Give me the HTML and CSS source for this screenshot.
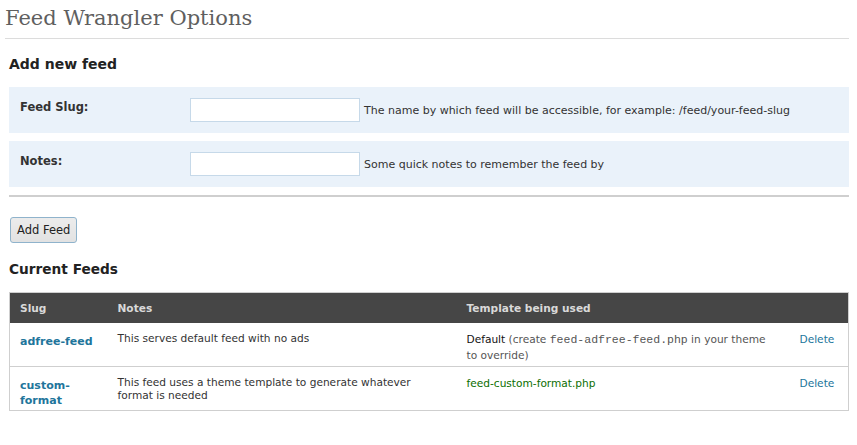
FILE: index.html
```html
<!DOCTYPE html>
<html>
<head>
<meta charset="utf-8">
<title>Feed Wrangler Options</title>
<link rel="stylesheet" href="styles.css">
</head>
<body>
<div class="wrap">
  <h2 class="page-title">Feed Wrangler Options</h2>
  <h3 class="section-title first">Add new feed</h3>
  <div class="form-row">
    <label class="form-label" for="slug">Feed Slug:</label>
    <input class="form-input" id="slug" type="text">
    <span class="form-help">The name by which feed will be accessible, for example: /feed/your-feed-slug</span>
  </div>
  <div class="form-row">
    <label class="form-label" for="notes">Notes:</label>
    <input class="form-input" id="notes" type="text">
    <span class="form-help">Some quick notes to remember the feed by</span>
  </div>
  <div class="divider"></div>
  <button class="button" type="button">Add Feed</button>
  <h3 class="section-title">Current Feeds</h3>
  <table class="feeds">
    <thead>
      <tr>
        <th class="col-slug">Slug</th>
        <th class="col-notes">Notes</th>
        <th class="col-template">Template being used</th>
        <th class="col-action"></th>
      </tr>
    </thead>
    <tbody>
      <tr>
        <td class="col-slug"><a class="slug" href="#">adfree-feed</a></td>
        <td class="col-notes">This serves default feed with no ads</td>
        <td class="col-template">Default <span class="tpl-hint">(create <code>feed-adfree-feed.php</code> in your theme to override)</span></td>
        <td class="col-action"><a class="delete" href="#">Delete</a></td>
      </tr>
      <tr>
        <td class="col-slug"><a class="slug" href="#">custom-format</a></td>
        <td class="col-notes">This feed uses a theme template to generate whatever format is needed</td>
        <td class="col-template"><span class="tpl-custom">feed-custom-format.php</span></td>
        <td class="col-action"><a class="delete" href="#">Delete</a></td>
      </tr>
    </tbody>
  </table>
</div>
</body>
</html>
```

FILE: styles.css
```css
html, body {
  margin: 0;
  padding: 0;
  background: #fff;
}
body {
  font-family: "DejaVu Sans", "Lucida Grande", Verdana, sans-serif;
  font-size: 10.6px;
  color: #333;
}
.wrap {
  padding: 0 8px 0 9px;
}
.page-title {
  font-family: "DejaVu Serif", Georgia, serif;
  font-weight: normal;
  font-size: 21px;
  color: #5f5f5f;
  margin: 0 0 0 -4px;
  line-height: 36px;
  border-bottom: 1px solid #dcdcdc;
  box-sizing: border-box;
  height: 39px;
}
.section-title {
  font-size: 14px;
  font-weight: bold;
  color: #222;
  margin: 0;
  height: 28px;
  line-height: 28px;
}
.section-title.first {
  margin-top: 11px;
  margin-bottom: 9px;
}
.form-row {
  display: flex;
  align-items: flex-start;
  background: #eaf2fa;
  height: 46px;
  box-sizing: border-box;
  padding: 11px 11px;
  margin-bottom: 8px;
}
.form-label {
  width: 170px;
  flex: none;
  font-size: 11.5px;
  font-weight: bold;
  color: #333;
  line-height: 14px;
  padding-top: 2px;
}
.form-input {
  width: 170px;
  height: 24px;
  box-sizing: border-box;
  border: 1px solid #c6d9e9;
  background: #fff;
  margin: 0;
  padding: 2px 4px;
  flex: none;
}
.form-help {
  margin-left: 4px;
  font-size: 11px;
  line-height: 14px;
  padding-top: 6px;
  color: #333;
}
.divider {
  height: 0;
  border-top: 2px solid #cfcfcf;
  margin-top: 2px;
}
.button {
  display: block;
  margin: 20px 0 0 1px;
  height: 26px;
  padding: 0 6px;
  font-family: "DejaVu Sans", "Lucida Grande", sans-serif;
  font-size: 11.5px;
  color: #222;
  background: linear-gradient(#ececec, #e2e2e2);
  border: 1px solid #8fb3cc;
  border-radius: 3px;
}
.button + .section-title {
  margin-top: 12px;
  margin-bottom: 9px;
  font-size: 13.7px;
}
.feeds {
  width: 100%;
  border-collapse: collapse;
  border: 1px solid #cfcfcf;
  table-layout: fixed;
}
.feeds th {
  background: #464646;
  color: #d9d9d9;
  font-weight: bold;
  font-size: 10.6px;
  text-align: left;
  height: 30px;
  padding: 0 10px;
  box-sizing: border-box;
}
.feeds td {
  vertical-align: top;
  height: 44px;
  padding: 9px 10px 0;
  box-sizing: border-box;
  border-bottom: 1px solid #cfcfcf;
  line-height: 13px;
}
.col-slug { width: 98px; }
.col-notes { width: 349px; }
.col-template { width: 333px; }
.col-action { width: 59px; }
.feeds td.col-notes { padding-right: 14px; }
.feeds td.col-slug { padding-top: 11px; }
.slug {
  color: #21759b;
  font-weight: bold;
  font-size: 11px;
  text-decoration: none;
  line-height: 15px;
}
.feeds td.col-template { line-height: 16px; padding-top: 8px; color: #111; }
.tpl-hint { color: #555; }
.tpl-hint code {
  font-family: "Liberation Mono", "Courier New", monospace;
  font-size: 11.5px;
  line-height: 1;
}
.tpl-custom { color: #0b6e00; }
.delete {
  color: #21759b;
  text-decoration: none;
}
.feeds td.col-action { padding-top: 8px; line-height: 16px; }
```
